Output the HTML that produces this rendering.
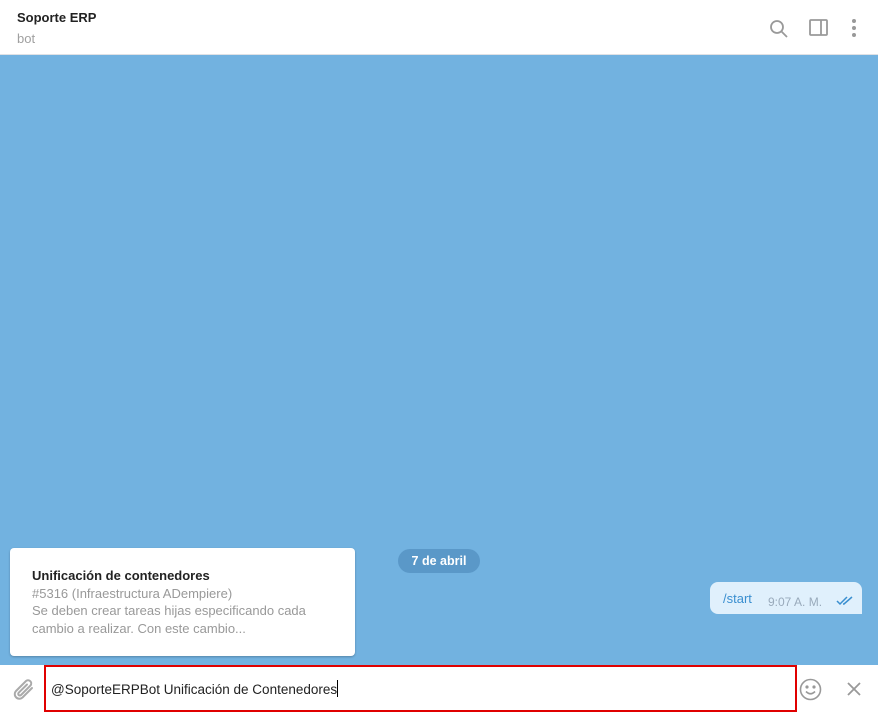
<!DOCTYPE html>
<html><head><meta charset="utf-8"><style>
*{margin:0;padding:0;box-sizing:border-box}
body{width:878px;height:713px;overflow:hidden;font-family:"Liberation Sans",sans-serif;background:#fff;position:relative}
.hdr{position:absolute;left:0;top:0;width:878px;height:55px;background:#fff;border-bottom:1px solid #dfe1e5}
.t{position:absolute;left:17px;top:10px;font-size:13px;font-weight:bold;color:#222}
.s{position:absolute;left:17px;top:31px;font-size:13px;color:#a0a0a0}
.bg{position:absolute;left:0;top:55px;width:878px;height:610px;background:#72b2e0}
.card{position:absolute;left:10px;top:548px;width:345px;height:108px;background:#fff;border-radius:4px;box-shadow:0 1px 2px rgba(0,0,0,.25);padding:19px 0 0 22px;font-size:13px;line-height:17.5px;color:#999}
.card b{color:#222;display:block}
.date{position:absolute;left:398px;top:549px;width:82px;height:24px;border-radius:12px;background:#5a98c8;color:#fff;font-size:12.5px;font-weight:bold;text-align:center;line-height:24px}
.msg{position:absolute;left:710px;top:582px;width:152px;height:32px;background:#e0f0fc;border-radius:8px 8px 0 8px;font-size:13px}
.msg .a{position:absolute;left:13px;top:9px;color:#3a8fd0}
.msg .b{position:absolute;left:58px;top:13px;color:#99aabb;font-size:12px}
.inp{position:absolute;left:44px;top:665px;width:753px;height:47px;border:2px solid #e00000;background:#fff}
.inp span{position:absolute;left:5px;top:13px;font-size:13.5px;color:#222}
.cur{display:inline-block;width:1px;height:17px;background:#000;vertical-align:-3px}
</style></head><body>
<div class="hdr"><div class="t">Soporte ERP</div><div class="s">bot</div>
<svg style="position:absolute;left:769px;top:19px" width="20" height="20" viewBox="0 0 20 20" fill="none" stroke="#999" stroke-width="1.8"><circle cx="8" cy="8" r="6"/><path d="M12.5 12.5L18 18"/></svg>
<svg style="position:absolute;left:809px;top:19px" width="20" height="18" viewBox="0 0 20 18" fill="none" stroke="#999" stroke-width="1.8"><rect x="1" y="1" width="17" height="15" rx="1"/><path d="M12 1v15"/></svg>
<svg style="position:absolute;left:850px;top:18px" width="8" height="20" viewBox="0 0 8 20" fill="#999"><circle cx="4" cy="3" r="2"/><circle cx="4" cy="10" r="2"/><circle cx="4" cy="17" r="2"/></svg>
</div>
<div class="bg"></div>
<div class="card"><b>Unificación de contenedores</b>#5316 (Infraestructura ADempiere)<br>Se deben crear tareas hijas especificando cada<br>cambio a realizar. Con este cambio...</div>
<div class="date">7 de abril</div>
<div class="msg"><span class="a">/start</span><span class="b">9:07 A. M.</span>
<svg style="position:absolute;left:126px;top:14px" width="18" height="10" viewBox="0 0 18 10" fill="none" stroke="#3a8fd0" stroke-width="1.5"><path d="M1 5l3 3L11 1M7 8l1 0L16 1"/></svg></div>
<svg style="position:absolute;left:12px;top:677px" width="24" height="25" viewBox="0 0 24 25" fill="none" stroke="#aaa" stroke-width="2" stroke-linecap="round"><path d="M20 11L10.5 20.5a4.6 4.6 0 01-6.5-6.5L14 4a3.2 3.2 0 014.5 4.5L9 18a1.6 1.6 0 01-2.3-2.3L15 7.5"/></svg>
<div class="inp"><span>@SoporteERPBot Unificación de Contenedores<i class="cur"></i></span></div>
<svg style="position:absolute;left:799px;top:678px" width="23" height="23" viewBox="0 0 23 23" fill="none" stroke="#999" stroke-width="1.6"><circle cx="11.5" cy="11.5" r="10"/><circle cx="8" cy="9" r=".8" fill="#999"/><circle cx="15" cy="9" r=".8" fill="#999"/><path d="M7 13.5q4.5 4.5 9 0"/></svg>
<svg style="position:absolute;left:847px;top:682px" width="14" height="14" viewBox="0 0 14 14" stroke="#999" stroke-width="1.8"><path d="M1 1l12 12M13 1L1 13"/></svg>
</body></html>
